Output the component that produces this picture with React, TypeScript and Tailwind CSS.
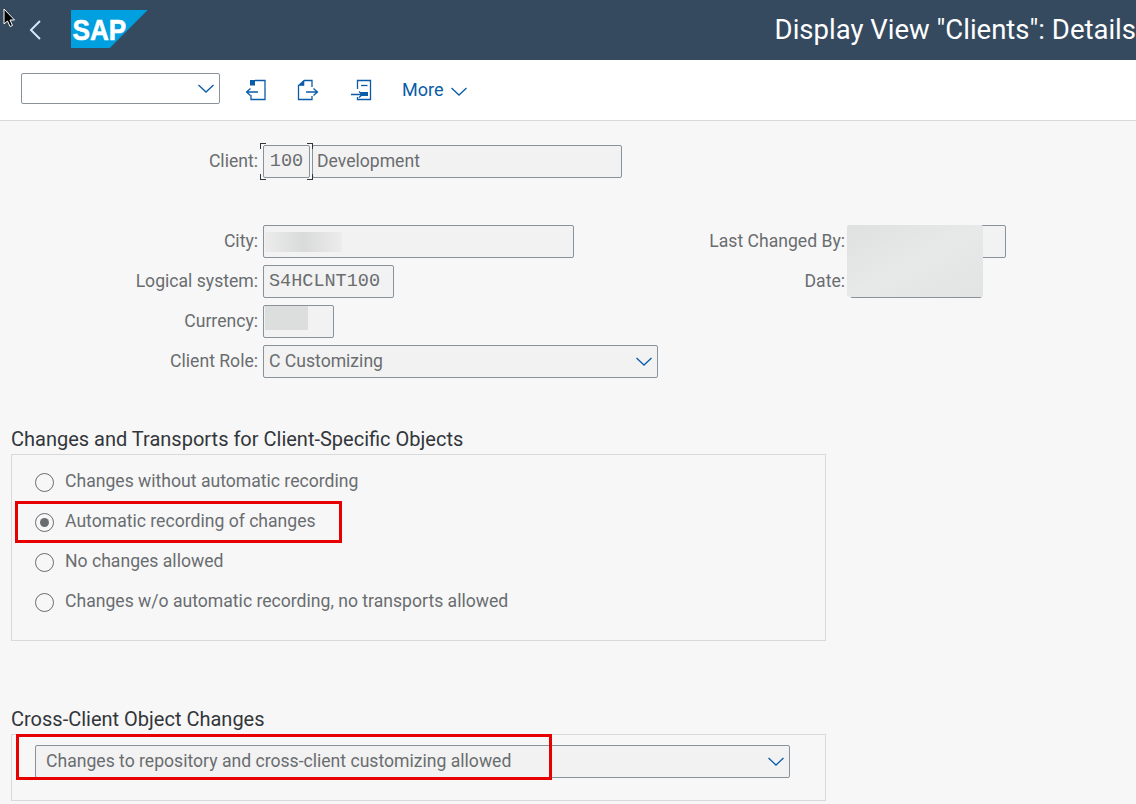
const sans = "font-['Roboto','Noto_Sans',sans-serif]";
const mono = "font-['Liberation_Mono',monospace] text-[18.5px]";

function Chevron({ className }: { className: string }) {
  return (
    <svg viewBox="0 0 16 9" className={className} fill="none" stroke="#0a5ca8" strokeWidth="1.3">
      <path d="M0.5 1 L8 8 L15.5 1" />
    </svg>
  );
}

function Field({ className, children }: { className: string; children?: React.ReactNode }) {
  return (
    <div className={`h-[33px] border border-[#89919a] rounded-[2px] bg-[#f2f2f2] flex items-center text-[#6a6d70] overflow-hidden ${className}`}>
      {children}
    </div>
  );
}

function Label({ className, children }: { className: string; children: React.ReactNode }) {
  return <div className={`text-[#6a6d70] text-right pr-[5px] leading-[32px] whitespace-nowrap ${className}`}>{children}</div>;
}

function Radio({ label, checked }: { label: string; checked?: boolean }) {
  return (
    <div className="h-[40px] flex items-center pl-[23px]">
      <div className="w-[19px] h-[19px] rounded-full border-[1.5px] border-[#6a6d70] bg-[#f7f7f7] flex items-center justify-center">
        {checked && <div className="w-[9px] h-[9px] rounded-full bg-[#6a6d70]" />}
      </div>
      <span className="ml-[11px] -mt-[2px] text-[#6a6d70] whitespace-nowrap">{label}</span>
    </div>
  );
}

export default function App() {
  return (
    <main className={`relative w-[1136px] h-[804px] overflow-hidden bg-[#f7f7f7] text-[17.6px] ${sans}`}>
      {/* shell bar */}
      <header className="h-[60px] bg-[#354a5f] flex items-center overflow-hidden whitespace-nowrap">
        <svg viewBox="0 0 12 20" className="ml-[29px] w-[12px] h-[20px]" fill="none" stroke="#d1e8ff" strokeWidth="2">
          <path d="M11 1 L2 10 L11 19" />
        </svg>
        <svg viewBox="0 0 77 38" className="ml-[30px] w-[77px] h-[38px] -mt-[3px]">
          <polygon points="0,0 77,0 39,38 0,38" fill="#009fe0" />
          <text x="1.5" y="30" fontFamily="Liberation Sans" fontWeight="700" fontSize="29" fill="#fff" stroke="#fff" strokeWidth="0.6" textLength="54" lengthAdjust="spacingAndGlyphs">SAP</text>
        </svg>
        <div className="ml-[627px] text-[27.5px] text-white shrink-0">Display View "Clients": Details</div>
      </header>

      {/* toolbar */}
      <div className="h-[61px] bg-white border-b border-[#d9d9d9] flex items-center pl-[21px] pb-[1px]">
        <div className="w-[199px] h-[31px] -mt-[2px] border border-[#89919a] rounded-[2px] bg-white flex items-center justify-end pr-[5px]">
          <Chevron className="w-[16px] h-[9px]" />
        </div>
        <svg viewBox="0 0 22 22" className="ml-[25px] w-[22px] h-[22px]" fill="none" stroke="#0a5ca8" strokeWidth="1.3">
          <path d="M10 1.5 H20 V20.5 H6 V16" />
          <path d="M5 1 H10 V6.5 H5 Z" fill="#0a5ca8" stroke="none" />
          <path d="M13 13 H2 M5.5 9.5 L1.5 13 L5.5 16.5" />
        </svg>
        <svg viewBox="0 0 22 22" className="ml-[30px] w-[22px] h-[22px]" fill="none" stroke="#0a5ca8" strokeWidth="1.3">
          <path d="M7 1.5 H15 V8 M15 17 V20.5 H1.5 V6" />
          <path d="M1 6.5 L7 1 V6.5 Z" fill="#0a5ca8" stroke="#0a5ca8" strokeWidth="0.6" />
          <path d="M9 13 H20 M16.5 9.5 L20.5 13 L16.5 16.5" />
        </svg>
        <svg viewBox="0 0 22 22" className="ml-[31px] w-[22px] h-[22px]" fill="none" stroke="#0a5ca8" strokeWidth="1.3">
          <path d="M7.5 10 V1.5 H20.5 V20.5 H7.5 V18" />
          <path d="M11 6.5 H17.5" />
          <path d="M10.5 13 H18 V17 H10.5 Z" fill="#0a5ca8" stroke="none" />
          <path d="M1 15.5 H12 M9 12.5 L12.5 15.5 L9 18.5" />
        </svg>
        <span className="ml-[30px] text-[#0a5ca8] text-[18px]">More</span>
        <Chevron className="ml-[8px] mt-[3px] w-[16px] h-[9px]" />
      </div>

      {/* form */}
      <div className="pt-[24px]">
        <div className="flex h-[33px]">
          <Label className="w-[263px]">Client:</Label>
          <div className="relative">
            <Field className={`w-[47px] justify-center ${mono}`}>100</Field>
            <span className="absolute -left-[3px] -top-[2px] w-[6px] h-[6px] border-l border-t border-[#32363a]" />
            <span className="absolute -right-[3px] -top-[2px] w-[6px] h-[6px] border-r border-t border-[#32363a]" />
            <span className="absolute -left-[3px] -bottom-[2px] w-[6px] h-[6px] border-l border-b border-[#32363a]" />
            <span className="absolute -right-[3px] -bottom-[2px] w-[6px] h-[6px] border-r border-b border-[#32363a]" />
          </div>
          <Field className="ml-[2px] w-[310px] pl-[4px]">Development</Field>
        </div>

        <div className="relative mt-[47px] flex flex-col gap-[7px]">
          <div className="flex">
            <div className="w-[850px] flex">
              <Label className="w-[263px]">City:</Label>
              <Field className="w-[311px] pl-[1px]">
                <div className="w-[77px] h-[20px] bg-gradient-to-r from-[#ececec] via-[#d9dada] to-[#ececec]" />
              </Field>
              <Label className="ml-auto">Last Changed By:</Label>
            </div>
            <Field className="w-[156px]" />
          </div>
          <div className="flex">
            <div className="w-[850px] flex">
              <Label className="w-[263px]">Logical system:</Label>
              <Field className={`w-[131px] pl-[5px] ${mono}`}>S4HCLNT100</Field>
              <Label className="ml-auto">Date:</Label>
            </div>
            <Field className="w-[132px]" />
          </div>
          <div className="flex">
            <Label className="w-[263px]">Currency:</Label>
            <Field className="w-[71px] pl-[1px] items-start">
              <div className="w-[43px] h-[24px] bg-[#dcdddd]" />
            </Field>
          </div>
          <div className="flex">
            <Label className="w-[263px]">Client Role:</Label>
            <Field className="w-[395px] pl-[5px] pr-[5px] justify-between">
              C Customizing
              <Chevron className="w-[16px] h-[9px]" />
            </Field>
          </div>
          {/* blurred-out name and date */}
          <div className="absolute left-[847px] top-0 w-[136px] h-[72px] rounded-[2px] bg-gradient-to-br from-[#dfe0e0] via-[#e7e8e8] to-[#e2e3e3]" />
        </div>
      </div>

      {/* changes and transports */}
      <div className="pl-[11px] pt-[49px]">
        <h2 className="h-[24px] leading-[24px] text-[#32363a] text-[20px] mb-[3px] whitespace-nowrap">Changes and Transports for Client-Specific Objects</h2>
        <div className="w-[815px] h-[187px] border border-[#d9d9d9] pt-[7px]">
          <Radio label="Changes without automatic recording" />
          <Radio label="Automatic recording of changes" checked />
          <Radio label="No changes allowed" />
          <Radio label="Changes w/o automatic recording, no transports allowed" />
        </div>
      </div>

      {/* cross-client */}
      <div className="pl-[11px] pt-[66px]">
        <h2 className="h-[24px] leading-[24px] text-[#32363a] text-[20px] mb-[3px] whitespace-nowrap">Cross-Client Object Changes</h2>
        <div className="w-[815px] h-[67px] border border-[#d9d9d9] pt-[10px] pl-[23px]">
          <Field className="w-[755px] pl-[10px] pr-[5px] justify-between">
            Changes to repository and cross-client customizing allowed
            <Chevron className="w-[16px] h-[9px]" />
          </Field>
        </div>
      </div>

      {/* screenshot annotations */}
      <div className="absolute left-[15px] top-[501px] w-[327px] h-[42px] border-[3px] border-[#e60000]" />
      <div className="absolute left-[16px] top-[734px] w-[536px] h-[46px] border-[3px] border-[#e60000]" />
      <svg viewBox="0 0 12 20" className="absolute left-[3px] top-[8px] w-[12px] h-[20px]">
        <path d="M1 1 V16 L4.5 13 L7 18.5 L9.5 17.5 L7 12 H11.5 Z" fill="#000" stroke="#fff" strokeWidth="1" />
      </svg>
    </main>
  );
}
